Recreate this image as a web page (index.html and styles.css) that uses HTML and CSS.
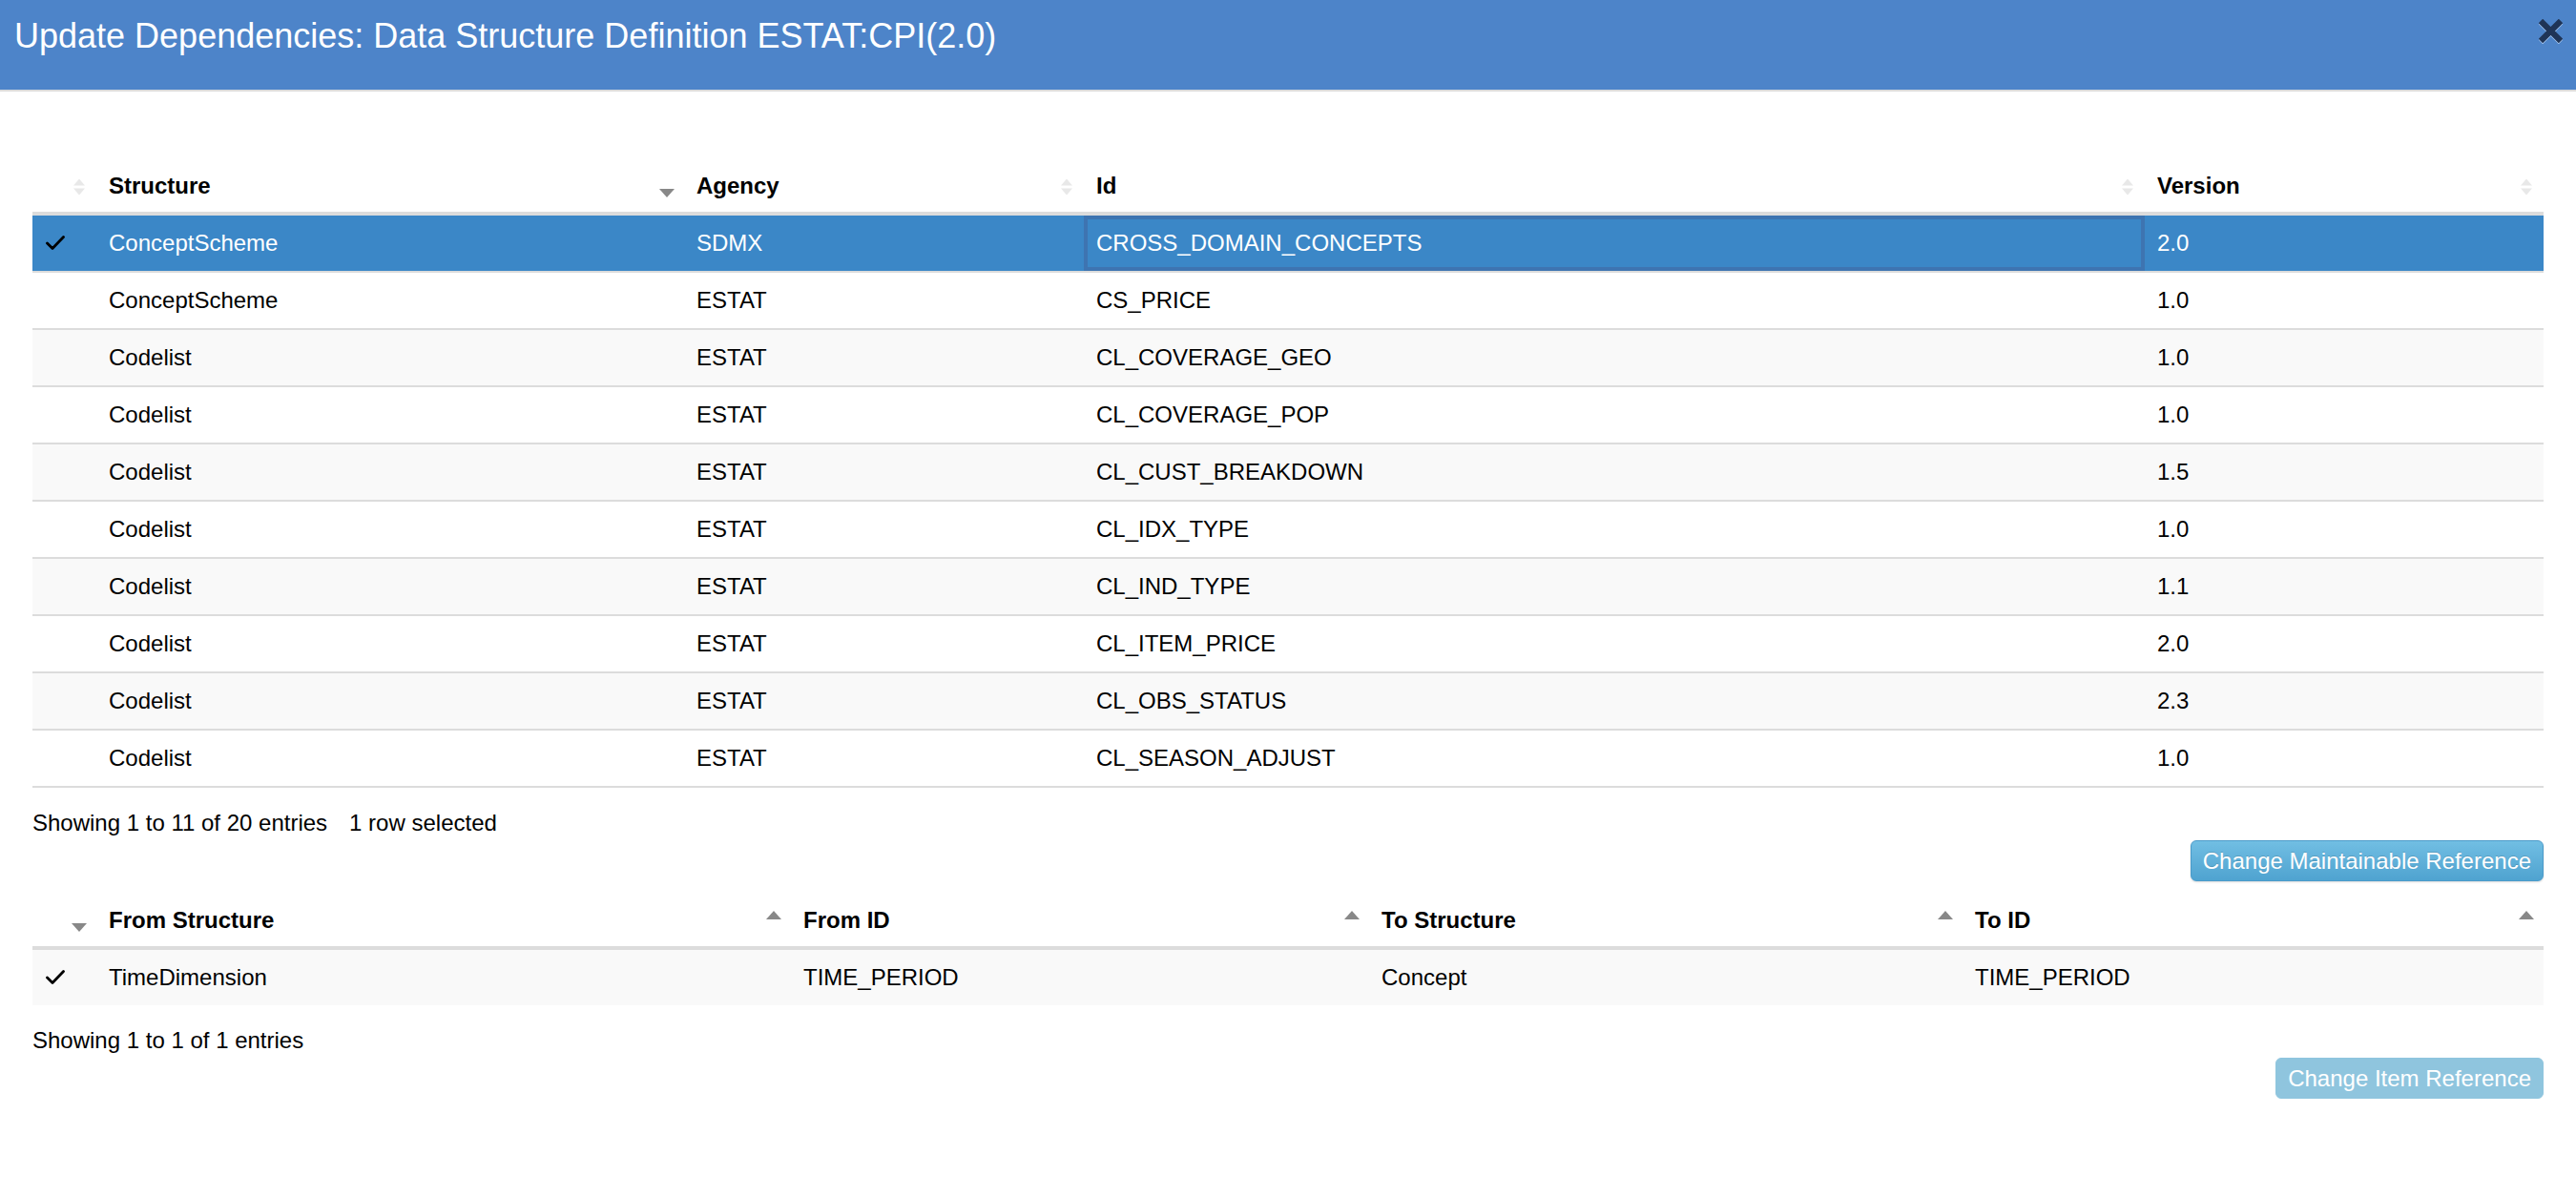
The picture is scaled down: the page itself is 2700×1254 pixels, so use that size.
FILE: index.html
```html
<!DOCTYPE html>
<html lang="en">
<head>
<meta charset="utf-8">
<title>Update Dependencies</title>
<link rel="stylesheet" href="styles.css">
</head>
<body>
<div class="dialog">
  <div class="titlebar">
    <span class="title">Update Dependencies: Data Structure Definition ESTAT:CPI(2.0)</span>
    <svg class="close" viewBox="0 0 24 24" width="24" height="24"><path d="M4 4 L20 20 M20 4 L4 20" /></svg>
  </div>
  <div class="content">
    <table class="grid rows">
      <colgroup>
        <col class="w67"><col style="width:616px"><col style="width:419px"><col style="width:1112px"><col style="width:418px">
      </colgroup>
      <thead>
        <tr>
          <th><svg class="sort" viewBox="0 0 16 26"><path class="both" d="M2 12.5 L8 5.5 L14 12.5 Z M2 15.5 L8 22.5 L14 15.5 Z"/></svg></th>
          <th>Structure<svg class="sort" viewBox="0 0 16 26"><path class="act" d="M0 16 L16 16 L8 25 Z"/></svg></th>
          <th>Agency<svg class="sort" viewBox="0 0 16 26"><path class="both" d="M2 12.5 L8 5.5 L14 12.5 Z M2 15.5 L8 22.5 L14 15.5 Z"/></svg></th>
          <th>Id<svg class="sort" viewBox="0 0 16 26"><path class="both" d="M2 12.5 L8 5.5 L14 12.5 Z M2 15.5 L8 22.5 L14 15.5 Z"/></svg></th>
          <th>Version<svg class="sort" viewBox="0 0 16 26"><path class="both" d="M2 12.5 L8 5.5 L14 12.5 Z M2 15.5 L8 22.5 L14 15.5 Z"/></svg></th>
        </tr>
      </thead>
      <tbody>
        <tr class="selected">
          <td><svg class="check" viewBox="0 0 20 16"><polyline points="1.5,8 7,13.5 18.5,1.5"/></svg></td>
          <td>ConceptScheme</td><td>SDMX</td><td class="focus">CROSS_DOMAIN_CONCEPTS</td><td>2.0</td>
        </tr>
        <tr><td></td><td>ConceptScheme</td><td>ESTAT</td><td>CS_PRICE</td><td>1.0</td></tr>
        <tr><td></td><td>Codelist</td><td>ESTAT</td><td>CL_COVERAGE_GEO</td><td>1.0</td></tr>
        <tr><td></td><td>Codelist</td><td>ESTAT</td><td>CL_COVERAGE_POP</td><td>1.0</td></tr>
        <tr><td></td><td>Codelist</td><td>ESTAT</td><td>CL_CUST_BREAKDOWN</td><td>1.5</td></tr>
        <tr><td></td><td>Codelist</td><td>ESTAT</td><td>CL_IDX_TYPE</td><td>1.0</td></tr>
        <tr><td></td><td>Codelist</td><td>ESTAT</td><td>CL_IND_TYPE</td><td>1.1</td></tr>
        <tr><td></td><td>Codelist</td><td>ESTAT</td><td>CL_ITEM_PRICE</td><td>2.0</td></tr>
        <tr><td></td><td>Codelist</td><td>ESTAT</td><td>CL_OBS_STATUS</td><td>2.3</td></tr>
        <tr><td></td><td>Codelist</td><td>ESTAT</td><td>CL_SEASON_ADJUST</td><td>1.0</td></tr>
      </tbody>
    </table>
    <div class="info">Showing 1 to 11 of 20 entries<span class="sel">1 row selected</span></div>
    <div class="actions"><button class="btn">Change Maintainable Reference</button></div>

    <table class="grid second">
      <colgroup>
        <col class="w67"><col style="width:728px"><col style="width:606px"><col style="width:622px"><col style="width:609px">
      </colgroup>
      <thead>
        <tr>
          <th><svg class="sort" viewBox="0 0 16 26"><path class="act" d="M0 16 L16 16 L8 25 Z"/></svg></th>
          <th>From Structure<svg class="sort" viewBox="0 0 16 26"><path class="act" d="M0 12 L16 12 L8 3 Z"/></svg></th>
          <th>From ID<svg class="sort" viewBox="0 0 16 26"><path class="act" d="M0 12 L16 12 L8 3 Z"/></svg></th>
          <th>To Structure<svg class="sort" viewBox="0 0 16 26"><path class="act" d="M0 12 L16 12 L8 3 Z"/></svg></th>
          <th>To ID<svg class="sort" viewBox="0 0 16 26"><path class="act" d="M0 12 L16 12 L8 3 Z"/></svg></th>
        </tr>
      </thead>
      <tbody>
        <tr>
          <td><svg class="check" viewBox="0 0 20 16"><polyline points="1.5,8 7,13.5 18.5,1.5"/></svg></td>
          <td>TimeDimension</td><td>TIME_PERIOD</td><td>Concept</td><td>TIME_PERIOD</td>
        </tr>
      </tbody>
    </table>
    <div class="info">Showing 1 to 1 of 1 entries</div>
    <div class="actions"><button class="btn disabled" disabled>Change Item Reference</button></div>
  </div>
</div>
</body>
</html>
```
FILE: styles.css
```css
html, body {
  margin: 0;
  padding: 0;
  background: #ffffff;
}
body {
  font-family: "Liberation Sans", Arial, Helvetica, sans-serif;
  color: #000;
  width: 2700px;
}
.titlebar {
  position: relative;
  box-sizing: border-box;
  height: 96px;
  background: #4d84c9;
  border-bottom: 2px solid #dcdcdc;
  padding: 17px 15px 0 15px;
}
.title {
  display: block;
  color: #ffffff;
  font-size: 36px;
  line-height: 42px;
  white-space: nowrap;
}
.close {
  position: absolute;
  top: 20px;
  right: 14px;
  width: 25px;
  height: 25px;
  filter: drop-shadow(0 1.5px 0 rgba(200, 225, 255, 0.75));
}
.close path {
  stroke: #1f3456;
  stroke-width: 6;
  stroke-linecap: square;
  fill: none;
}
.content {
  padding: 71px 34px 0 34px;
}
.grid {
  width: 2632px;
  table-layout: fixed;
  border-collapse: separate;
  border-spacing: 0;
}
.w67 { width: 67px; }
.grid th {
  position: relative;
  height: 55px;
  padding: 0 13px;
  text-align: left;
  font-size: 24px;
  font-weight: bold;
  border-bottom: 4px solid #dcdcdc;
  white-space: nowrap;
}
.grid td {
  height: 58px;
  padding: 0 13px;
  font-size: 24px;
  white-space: nowrap;
}
.rows td {
  border-bottom: 2px solid #dcdcdc;
}
.grid tbody tr:nth-child(odd) {
  background: #f9f9f9;
}
.grid tbody tr.selected {
  background: #3b87c7;
  color: #ffffff;
}
.grid td.focus {
  box-shadow: inset 0 0 0 4px #3e74b1;
}
.sort {
  position: absolute;
  right: 10px;
  top: 50%;
  margin-top: -13px;
  width: 16px;
  height: 26px;
}
.sort .both { fill: #e8e8e8; }
.sort .act { fill: #888888; }
.check {
  display: block;
  width: 20px;
  height: 16px;
  margin-left: 1px;
}
.check polyline {
  fill: none;
  stroke: #000;
  stroke-width: 2.8;
  stroke-linecap: round;
  stroke-linejoin: round;
}
.info {
  margin-top: 20px;
  font-size: 24px;
  line-height: 34px;
}
.sel {
  margin-left: 23px;
}
.actions {
  display: flex;
  justify-content: flex-end;
  margin-top: 1px;
  margin-bottom: 13px;
}
.btn {
  box-sizing: border-box;
  height: 43px;
  padding: 0 12px;
  font-family: "Liberation Sans", Arial, Helvetica, sans-serif;
  font-size: 24px;
  color: #ffffff;
  background: linear-gradient(#71bee3, #4fa3d0);
  border: 1px solid #4b9bca;
  border-radius: 6px;
  box-shadow: 0 1px 2px rgba(0, 0, 0, 0.15);
  text-shadow: 0 -1px 0 rgba(0, 0, 0, 0.15);
}
.btn.disabled {
  background: #8fc5de;
  border-color: #8fc5de;
  box-shadow: none;
  text-shadow: none;
}
```
